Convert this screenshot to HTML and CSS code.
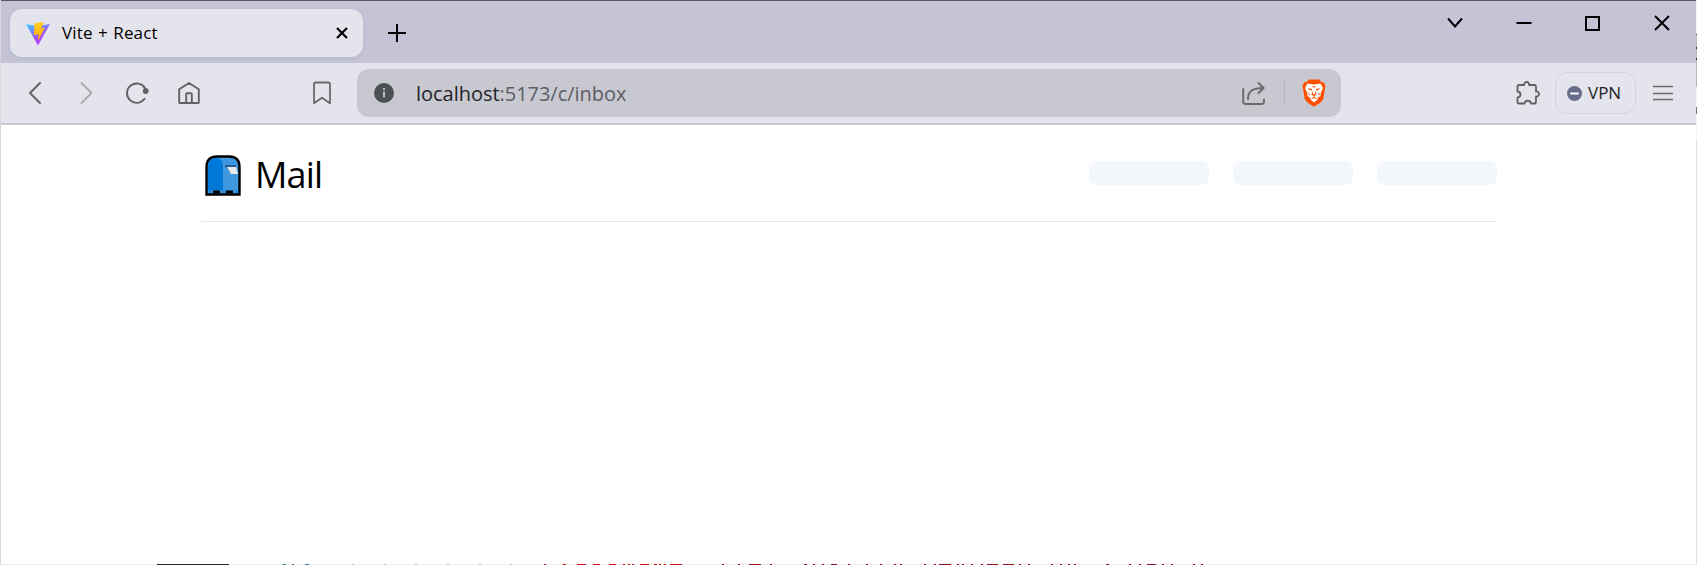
FILE: index.html
```html
<!DOCTYPE html>
<html lang="en">
<head>
<meta charset="utf-8">
<title>Vite + React</title>
<link rel="stylesheet" href="styles.css">
</head>
<body>
<div class="window">
  <header class="tabbar">
    <div class="tab">
      <svg class="favicon" width="26" height="25" viewBox="0 0 26 25">
        <defs>
          <linearGradient id="vite" x1="0" y1="0" x2=".6" y2="1"><stop offset="0" stop-color="#41d1ff"/><stop offset=".7" stop-color="#a64cfe"/><stop offset="1" stop-color="#bd34fe"/></linearGradient>
          <linearGradient id="bolt" x1="0" y1="0" x2="0" y2="1"><stop offset="0" stop-color="#ffcf20"/><stop offset="1" stop-color="#ffa800"/></linearGradient>
        </defs>
        <path d="M1 3.200 13 5 25 3 13 24.500Z" fill="url(#vite)"/>
        <path d="M9.500 2.200 18.600.8 16.300 7.200 19.800 6.700 13 20 13.600 13.300 9 14Z" fill="url(#bolt)"/>
      </svg>
      <span class="tab-title">Vite + React</span>
      <svg class="tab-close" width="12" height="12" viewBox="0 0 12 12"><path d="M1 1 11 11M11 1 1 11"/></svg>
    </div>
    <svg class="new-tab" width="18" height="18" viewBox="0 0 18 18"><path d="M9 0V18M0 9H18"/></svg>
    <div class="controls">
      <svg width="16" height="16" viewBox="0 0 16 16"><path d="M1 3.500 8 11.500 15 3.500"/></svg>
      <svg width="16" height="16" viewBox="0 0 16 16"><path d="M.5 8H15.500"/></svg>
      <svg width="16" height="16" viewBox="0 0 16 16"><path d="M1 2H14V15H1Z"/></svg>
      <svg width="16" height="16" viewBox="0 0 16 16"><path d="M1 1 15 15M15 1 1 15"/></svg>
    </div>
  </header>
  <nav class="toolbar">
    <div class="nav-icons">
      <svg width="24" height="24" viewBox="0 0 24 24"><path d="M17 2 7 12 17 22"/></svg>
      <svg class="disabled" width="24" height="24" viewBox="0 0 24 24"><path d="M7.500 2 17.500 12 7.500 22"/></svg>
      <svg width="24" height="24" viewBox="0 0 24 24"><path d="M19.600 17.800A9.700 9.700 0 1 1 20.200 7.500"/><circle class="dot" cx="20.700" cy="10" r="2.900"/></svg>
      <svg class="home" width="24" height="24" viewBox="0 0 24 24"><path d="M2.200 8.200 12 2 21.800 8.200V21.200A.8.8 0 0 1 21 22H3A.8.8 0 0 1 2.200 21.200ZM9.200 22V13Q9.200 12.200 10 12.200H14Q14.800 12.200 14.800 13V22"/></svg>
    </div>
    <svg class="bookmark" width="20" height="24" viewBox="0 0 20 24"><path d="M2 3.200Q2 1.500 3.700 1.500H16.300Q18 1.500 18 3.200V22.200L10 16.700 2 22.200Z"/></svg>
    <div class="address">
      <svg class="info" width="20" height="20" viewBox="0 0 20 20"><circle cx="10" cy="10" r="10" fill="#4c5054"/><path d="M10 8.500V14.500M10 5V7" stroke="#c8c8d0" stroke-width="1.800"/></svg>
      <span class="url"><b>localhost</b>:5173/c/inbox</span>
      <svg class="share" width="26" height="26" viewBox="0 0 26 26"><path d="M2.200 9V21.500Q2.200 24 4.700 24H20.500Q23 24 23 21.500V19.500M7 19C7 11 12 8 22.500 8M17.500 3 22.700 8 17.500 13"/></svg>
      <span class="divider"></span>
      <svg class="brave" width="24" height="28" viewBox="0 0 24 28">
        <path d="M7 .5H17L19.500 3 22 3.500 23.500 7 23 9.500 21.200 20.500 18 24 12 27.700 6 24 2.800 20.500 1 9.500.5 7 2 3.500 4.500 3Z" fill="#ff5000"/>
        <path d="M5.500 4.500 9 5 12 5.500 15 5 18.500 4.500 21 9 19 13.500 18.500 17 16 18.500 15.500 20.500 12 23.500 8.500 20.500 8 18.500 5.500 17 5 13.500 3 9Z" fill="#fff"/>
        <path d="M6 9.200 10 10 9.800 11.400 7 10.800ZM18 9.200 14 10 14.200 11.400 17 10.800ZM10.200 7.300H13.800L12 9ZM10.300 11.500 11 15.200H13L13.700 11.500 14.500 15.500 12.500 17V18.200L15 19.500 14 20 12 19 10 20 9 19.500 11.500 18.200V17L9.500 15.500ZM5 13.500 8 15 7.500 16.500ZM19 13.500 16 15 16.500 16.500Z" fill="#ff5000"/>
      </svg>
    </div>
    <div class="tools">
      <svg class="puzzle" width="26" height="26" viewBox="0 0 26 26"><path d="M4 5H9.200C8.500 1 14.800 1 14 5H19.500Q21 5 21 6.500V11.500C25 11 25 17 21 16.500V21.500Q21 23.500 19.500 23.500H16C15.500 19.800 10 19.800 9.500 23.500H4Q2.500 23.500 2.500 22V17.500C6.500 17 6.500 12 2.500 11.500V6.500Q2.500 5 4 5Z"/></svg>
      <div class="vpn"><svg width="15" height="15" viewBox="0 0 15 15"><circle cx="7.500" cy="7.500" r="7.500" fill="#686d8c"/><path d="M3.300 7.500H11.700" stroke="#fff" stroke-width="2"/></svg><span>VPN</span></div>
      <svg class="menu" width="20" height="16" viewBox="0 0 20 16"><path d="M0 1.500H20M0 8.500H20M0 14.500H20"/></svg>
    </div>
  </nav>
  <main class="page">
    <div class="mail-header">
      <svg class="mailbox" width="36" height="41" viewBox="0 0 36 41">
        <path d="M1.500 39.500V12Q1.500 1.500 12 1.500H24Q34.500 1.500 34.500 12V39.500Z" fill="#3f98df" stroke="#000" stroke-width="2.400"/>
        <path d="M3 35V12Q3 3 10.500 3 18 3 18 12V35Z" fill="#0078d7"/>
        <path d="M3 35H33V38H31V35.500H24V38H22V35.500H20V38H17V35.500H7V38H3Z" fill="#2688d9"/>
        <path d="M8 38.500V35.500H15V38.500ZM21 38.500V35.500H28V38.500Z" fill="#000"/>
        <path d="M20 10H31V12.500H20Z" fill="#1e5e9a"/>
        <path d="M22 12H31L33 19H26Z" fill="#e9e9e9"/>
        <path d="M22 12 26 19 24.500 15Z" fill="#aaa"/>
      </svg>
      <h1>Mail</h1>
      <div class="placeholders"><i></i><i></i><i></i></div>
    </div>
  </main>
  <svg class="behind" width="1697" height="1" viewBox="0 0 1697 1">
    <path stroke="#ececec" d="M0 .5H1697"/>
    <path stroke="#29232a" d="M157 .5H229"/>
    <path stroke="#357b99" d="M283 .5h3M292 .5h2M305 .5h4"/>
    <path stroke="#bbb" d="M352 .5h2M384 .5h2M415 .5h2M447 .5h2M479 .5h2M510 .5h2"/>
    <path stroke="#d00c0c" d="M544 .5h2M563 .5h3M577 .5h9M593 .5h7M609 .5h7M623 .5h2M628 .5h2M632 .5h2M640 .5h9M654 .5h3M659 .5h2M664 .5h2M670 .5h12"/>
    <path stroke="#991421" d="M722 .5h2M738 .5h2M749 .5h12M770 .5h2M804 .5h3M813 .5h2M822 .5h2M831 .5h6M848 .5h2M866 .5h2M880 .5h2M894 .5h2M900 .5h2M924 .5h2M934 .5h2M939 .5h12M957 .5h2M962 .5h2M971 .5h2M981 .5h2M987 .5h11M1003 .5h11M1019 .5h2M1028 .5h2M1051 .5h2M1060 .5h2M1068 .5h2M1074 .5h2M1106 .5h3M1129 .5h2M1139 .5h2M1147 .5h9M1162 .5h2M1171 .5h2M1193 .5h2M1201 .5h2"/>
  </svg>
</div>
<svg class="edge" width="1" height="140" viewBox="0 0 1 140">
  <path stroke="#f2f2f4" d="M.5 0V140"/>
  <path stroke="#b4b4c2" d="M.5 34V87"/>
  <path stroke="#333" d="M.5 34v1M.5 47v2M.5 58v2"/>
  <path stroke="#777" d="M.5 107v7"/>
</svg>
</body>
</html>
```
FILE: styles.css
```css
* { box-sizing: border-box; }
body { margin: 0; font-family: "Open Sans", "Noto Sans", sans-serif; }
svg { display: block; flex: none; fill: none; }
.window { width: 1697px; height: 565px; display: flex; flex-direction: column; overflow: hidden; background: #fff; border-left: 1px solid #d8d8dc; border-right: 1px solid #e0e0e4; }
.tabbar { height: 63px; flex: none; display: flex; align-items: flex-start; padding: 8px 20px 0 9px; background: #c4c4d6; border-top: 1px solid #5c5b65; }
.tab { width: 353px; height: 48px; display: flex; align-items: center; padding: 0 15px; border-radius: 12px; background: #e4e4ec; box-shadow: 0 1px 4px rgb(80 80 120 / 12%); }
.tab-title { margin-left: 11px; flex: 1; font-size: 17px; font-weight: 400; line-height: 24px; letter-spacing: .15px; word-spacing: .8px; color: #000; }
.tab-close { stroke: #000; stroke-width: 2.2; }
.new-tab { margin: 15px 0 0 25px; stroke: #000; stroke-width: 2; }
.controls { margin: 6px 6px 0 auto; display: flex; gap: 53px; stroke: #000; stroke-width: 2; }
.toolbar { height: 62px; flex: none; display: flex; align-items: center; padding: 0 23px 0 22px; background: #e4e4ec; border-bottom: 2px solid #c8c8d2; }
.nav-icons { display: flex; gap: 27px; stroke: #606166; stroke-width: 1.9; stroke-linecap: round; stroke-linejoin: round; }
.disabled { stroke: #a9a9b0; }
.dot { fill: #606166; stroke: none; }
.home { margin-left: 1px; }
.bookmark { margin-left: 111px; stroke: #68696e; stroke-width: 1.8; stroke-linejoin: round; }
.address { margin-left: 25px; width: 984px; height: 48px; display: flex; align-items: center; padding: 0 15px 0 17px; border-radius: 12px; background: #c8c8d0; }
.url { margin-left: 22px; padding-top: 1px; flex: 1; font-size: 20px; font-weight: 400; line-height: 28px; letter-spacing: -.03px; color: #5c5d64; }
.url b { font-weight: 400; color: #222327; }
.share { stroke: #68696e; stroke-width: 1.9; stroke-linecap: round; stroke-linejoin: round; }
.divider { width: 1px; height: 24px; margin: 0 17px; background: #b4b4be; }
.tools { margin-left: auto; display: flex; align-items: center; }
.puzzle { stroke: #606166; stroke-width: 1.8; stroke-linejoin: round; }
.vpn { margin: 0 17px 0 14px; width: 81px; height: 42px; display: flex; align-items: center; gap: 6px; padding-left: 11px; border: 1px solid #d3d3dc; border-radius: 12px; font-size: 17px; font-weight: 400; line-height: 24px; color: #222327; }
.vpn span { padding-bottom: 1px; }
.menu { stroke: #68696e; stroke-width: 1.4; }
.page { flex: 1; }
.mail-header { width: 1296px; height: 97px; margin-left: 200px; display: flex; align-items: flex-start; border-bottom: 1px solid #e4e4ea; }
.mailbox { margin: 30px 0 0 4px; }
h1 { margin: 25px 0 0 14px; font-size: 36px; font-weight: 400; line-height: 49px; letter-spacing: -.8px; color: #000; }
.placeholders { display: flex; gap: 24px; margin: 36px 0 0 auto; }
.placeholders i { width: 120px; height: 24px; border-radius: 8px; background: #f3f6fb; }
.behind { margin-left: -1px; stroke-width: 1; }
/* sliver of the window underneath, over the right border */
.edge { position: absolute; top: 0; left: 1696px; stroke-width: 1; }
```
